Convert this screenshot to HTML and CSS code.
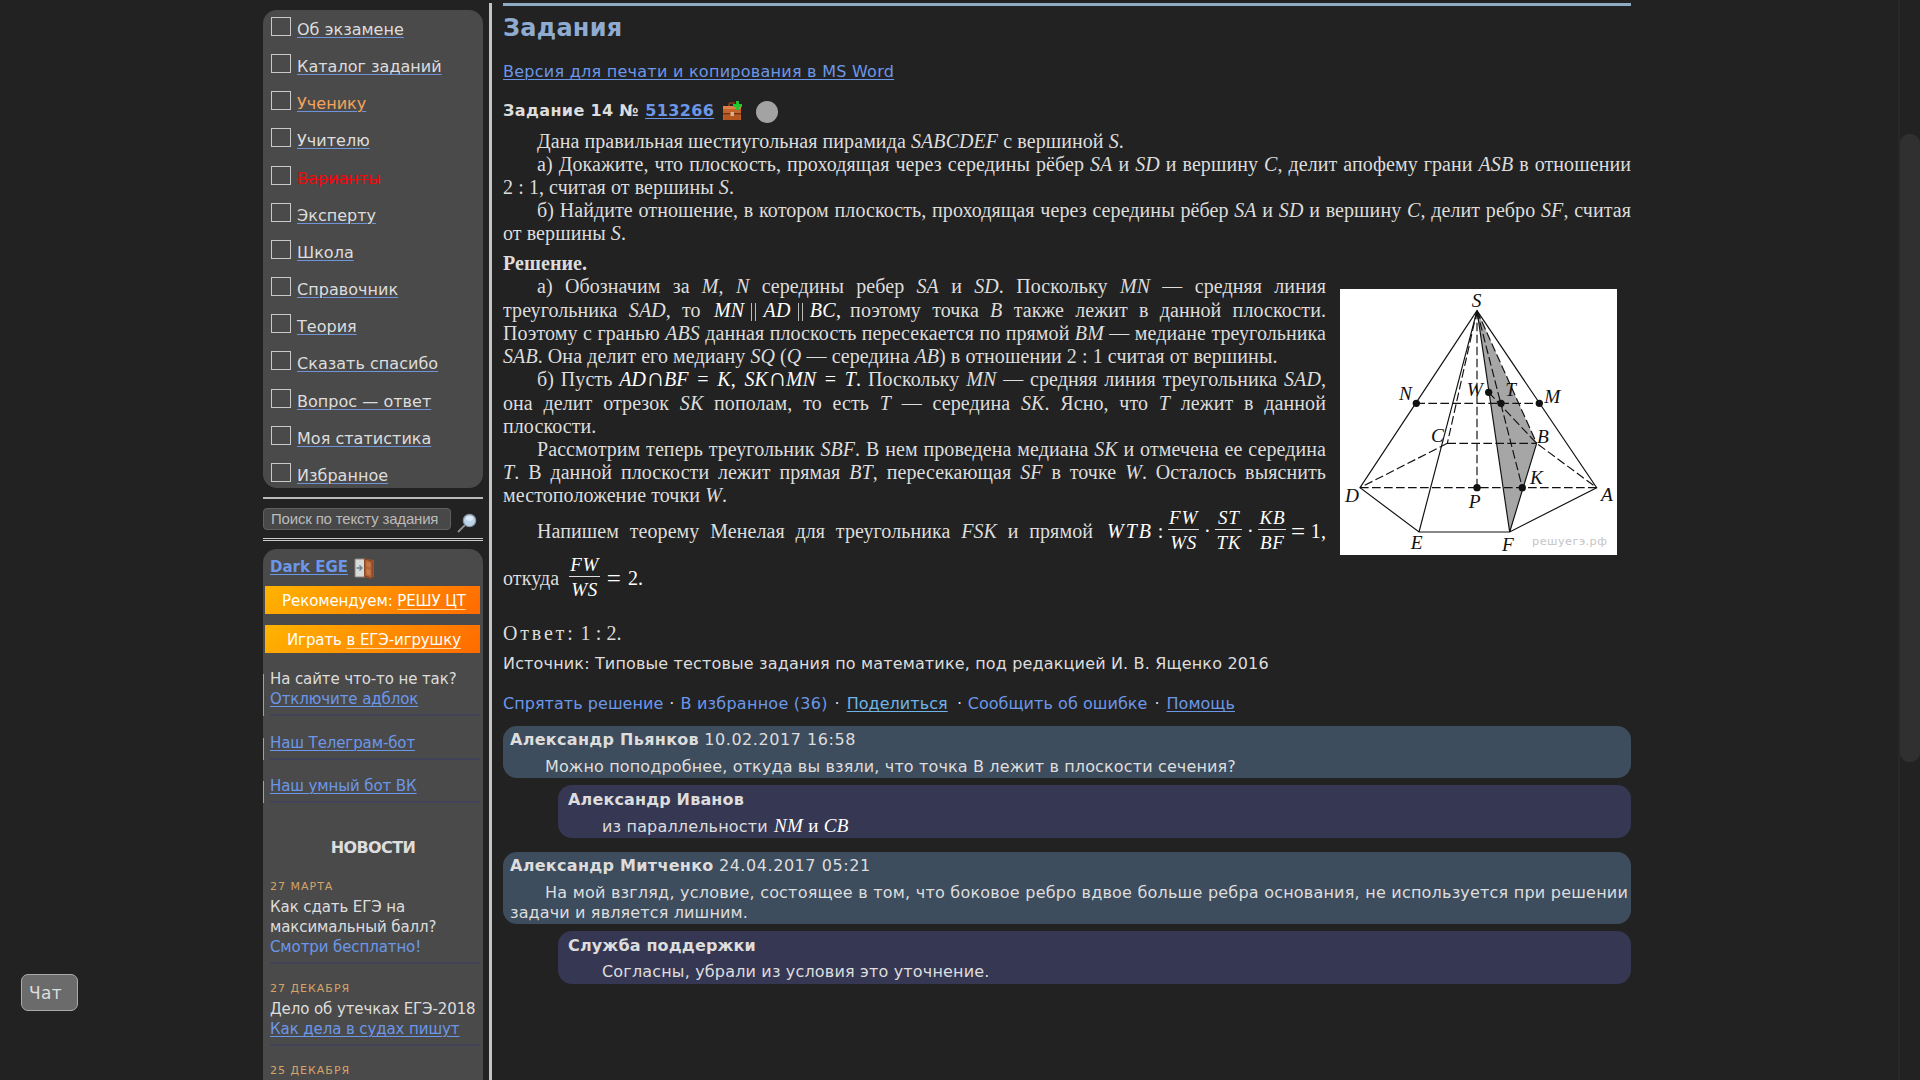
FILE: index.html
```html
<!DOCTYPE html>
<html lang="ru">
<head>
<meta charset="utf-8">
<title>Задания</title>
<link rel="stylesheet" href="styles.css">
</head>
<body>
<div class="page">
  <aside class="sidebar">
    <nav class="menu">
      <a class="item"><i class="box"></i><span>Об экзамене</span></a>
      <a class="item"><i class="box"></i><span>Каталог заданий</span></a>
      <a class="item orange"><i class="box"></i><span>Ученику</span></a>
      <a class="item"><i class="box"></i><span>Учителю</span></a>
      <a class="item red"><i class="box"></i><span>Варианты</span></a>
      <a class="item"><i class="box"></i><span>Эксперту</span></a>
      <a class="item"><i class="box"></i><span>Школа</span></a>
      <a class="item"><i class="box"></i><span>Справочник</span></a>
      <a class="item"><i class="box"></i><span>Теория</span></a>
      <a class="item"><i class="box"></i><span>Сказать спасибо</span></a>
      <a class="item"><i class="box"></i><span>Вопрос — ответ</span></a>
      <a class="item"><i class="box"></i><span>Моя статистика</span></a>
      <a class="item"><i class="box"></i><span>Избранное</span></a>
    </nav>
    <div class="rule"></div>
    <div class="search">
      <div class="field">Поиск по тексту задания</div>
      <svg width="22" height="22" viewBox="0 0 22 22"><path d="M1 20 8 13" stroke="#8f8f8f" stroke-width="1.8"/><circle cx="12.500" cy="8.500" r="6.200" fill="#bcd3e8" stroke="#8794a3" stroke-width="1.2"/><ellipse cx="12.500" cy="6.500" rx="3.600" ry="2.400" fill="#dceaf6"/></svg>
    </div>
    <div class="rule-double"></div>
    <section class="panel">
      <div class="user"><a class="link">Dark EGE</a>
        <svg width="21" height="22" viewBox="0 0 21 22"><path d="M1 1h10v18H1z" fill="#d9dbdb" stroke="#8b8480"/><path d="M10 .5 20 2v17l-3 2-7-2z" fill="#9c5230"/><path d="m11 1 7 2.500V20l-7-2z" fill="#b5673a" stroke="#70351d" stroke-width=".6"/><path d="m12.500 4 4 1.300v4l-4-1.300zM12.500 11l4 1.300v5l-4-1.300z" fill="#c57a4e"/><path d="M2.500 10h5M5.500 7.500 8 10l-2.500 2.500" fill="none" stroke="#6c8290" stroke-width="1.400"/></svg>
      </div>
      <div class="banner"><span>Рекомендуем: <u>РЕШУ ЦТ</u></span></div>
      <div class="banner"><span>Играть <u>в ЕГЭ-игрушку</u></span></div>
      <div class="note adblock">На сайте что-то не так?<br><a class="link">Отключите адблок</a></div>
      <div class="note telegram"><a class="link">Наш Телеграм-бот</a></div>
      <div class="note vk"><a class="link">Наш умный бот ВК</a></div>
      <h3 class="news-title">НОВОСТИ</h3>
      <div class="news"><div class="date">27 МАРТА</div>Как сдать ЕГЭ на<br>максимальный балл?<br><a class="plain">Смотри бесплатно!</a></div>
      <div class="news"><div class="date">27 ДЕКАБРЯ</div>Дело об утечках ЕГЭ-2018<br><a class="link">Как дела в судах пишут</a></div>
      <div class="news"><div class="date">25 ДЕКАБРЯ</div></div>
    </section>
  </aside>
  <div class="divider"></div>
  <main class="main">
    <h1>Задания</h1>
    <p class="print"><a class="link">Версия для печати и копирования в MS Word</a></p>
    <div class="task-head"><b>Задание 14 № <a class="link">513266</a></b>
      <svg class="case" width="22" height="22" viewBox="0 0 22 22"><path d="M7 6V3.500Q7 2 8.500 2H13" fill="none" stroke="#8d3a17" stroke-width="1.600"/><path d="M1 5h18v14H1z" fill="#c4622b"/><path d="M1 5h18v3H1z" fill="#dd8146"/><path d="M1 12h18v1.500H1z" fill="#7a3213"/><path d="M2 14h16v5H2z" fill="#b5571f"/><path d="M8.500 11h3.500v4H8.500z" fill="#d9b48a"/><path d="M15.500 0v9M11 4.500h9" stroke="#1fc92d" stroke-width="2.800"/></svg>
      <i class="dot"></i>
    </div>
    <article class="text statement">
      <p class="in">Дана правильная шестиугольная пирамида <i>SABCDEF</i> с вершиной <i>S</i>.</p>
      <p class="in j">а) Докажите, что плоскость, проходящая через середины рёбер <i>SA</i> и <i>SD</i> и вершину <i>C</i>, делит апофему грани <i>ASB</i> в отношении</p>
      <p>2 : 1, считая от вершины <i>S</i>.</p>
      <p class="in j">б) Найдите отношение, в котором плоскость, проходящая через середины рёбер <i>SA</i> и <i>SD</i> и вершину <i>C</i>, делит ребро <i>SF</i>, считая</p>
      <p>от вершины <i>S</i>.</p>
    </article>
    <div class="solution">
      <article class="text">
        <p><b>Решение.</b></p>
        <p class="in j">а) Обозначим за <i>M, N</i> середины ребер <i>SA</i> и <i>SD</i>. Поскольку <i>MN</i> — средняя линия</p>
        <p class="j tall">треугольника <i>SAD</i>, то <span class="math m1"><i>MN</i><s class="par"></s><i>AD</i><s class="par"></s><i>BC</i>,</span> поэтому точка <i>B</i> также лежит в данной плоскости.</p>
        <p class="j">Поэтому с гранью <i>ABS</i> данная плоскость пересекается по прямой <i>BM</i> — медиане треугольника</p>
        <p><i>SAB</i>. Она делит его медиану <i>SQ</i> (<i>Q</i> — середина <i>AB</i>) в отношении 2 : 1 считая от вершины.</p>
        <p class="in j">б) Пусть <span class="math m2"><i>AD</i><span class="cap">∩</span><i>BF</i> = <i>K</i>, <i>SK</i><span class="cap">∩</span><i>MN</i> = <i>T</i>.</span> Поскольку <i>MN</i> — средняя линия треугольника <i>SAD</i>,</p>
        <p class="j tall">она делит отрезок <i>SK</i> пополам, то есть <i>T</i> — середина <i>SK</i>. Ясно, что <i>T</i> лежит в данной</p>
        <p>плоскости.</p>
        <p class="in j">Рассмотрим теперь треугольник <i>SBF</i>. В нем проведена медиана <i>SK</i> и отмечена ее середина</p>
        <p class="j"><i>T</i>. В данной плоскости лежит прямая <i>BT</i>, пересекающая <i>SF</i> в точке <i>W</i>. Осталось выяснить</p>
        <p>местоположение точки <i>W</i>.</p>
        <div class="formula">
          <p class="in j grow">Напишем теорему Менелая для треугольника <i>FSK</i> и прямой</p>
          <div class="math expr"><i class="sp">WTB</i><span>:</span><span class="frac"><i>FW</i><i>WS</i></span><span>·</span><span class="frac"><i>ST</i><i>TK</i></span><span>·</span><span class="frac"><i>KB</i><i>BF</i></span><span class="eq">=</span><span>1,</span></div>
        </div>
        <div class="formula">
          <p>откуда</p>
          <div class="math expr short"><span class="frac"><i>FW</i><i>WS</i></span><span class="eq">=</span><span>2.</span></div>
        </div>
        <p class="answer"><span>Ответ:</span> 1 : 2.</p>
      </article>
      <svg class="figure" width="277" height="266" viewBox="30 57 831 798">
        <path fill="#fff" d="M30 57h831v798H30z"/>
        <path fill="#a6a6a6" d="M441 122 620 520 539 786z"/>
        <g fill="none" stroke="#111" stroke-width="3.500">
          <path d="M441 122 90 653 267 786H539L800 653zM441 122 267 786M441 122 539 786 620 520"/>
          <path stroke-dasharray="26 10" d="M441 122V653M90 653H800M259 400H628M352 520H620M352 520 90 653M441 122 352 520M441 122 620 520M441 122 577 653M476 367 620 520 800 653"/>
        </g>
        <g fill="#111"><circle cx="259" cy="400" r="11"/><circle cx="628" cy="400" r="11"/><circle cx="476" cy="367" r="11"/><circle cx="513" cy="400" r="11"/><circle cx="441" cy="653" r="11"/><circle cx="577" cy="653" r="11"/></g>
        <g class="labels"><text x="425" y="111">S</text><text x="207" y="390">N</text><text x="410" y="377">W</text><text x="526" y="378">T</text><text x="643" y="400">M</text><text x="303" y="515">C</text><text x="621" y="519">B</text><text x="600" y="643">K</text><text x="45" y="697">D</text><text x="416" y="715">P</text><text x="813" y="693">A</text><text x="242" y="836">E</text><text x="516" y="844">F</text></g>
        <text class="mark" x="606" y="825" textLength="225">решуегэ.рф</text>
      </svg>
    </div>
    <p class="source">Источник: Типовые тестовые задания по математике, под редакцией И. В. Ященко 2016</p>
    <div class="actions"><a>Спрятать решение</a><b class="narrow">·</b><a class="fav">В избранное (36)</a><b>·</b><a class="share">Поделиться</a><b class="wide">·</b><a>Сообщить об ошибке</a><b>·</b><a class="link">Помощь</a></div>
    <div class="comments">
      <div class="comment"><div class="who"><b>Александр Пьянков</b> <time>10.02.2017 16:58</time></div><p>Можно поподробнее, откуда вы взяли, что точка В лежит в плоскости сечения?</p></div>
      <div class="comment reply"><div class="who"><b>Александр Иванов</b></div><p>из параллельности <span class="math nm"><i>NM</i> и <i>CB</i></span></p></div>
      <div class="comment large"><div class="who"><b>Александр Митченко</b> <time>24.04.2017 05:21</time></div><p class="long">На мой взгляд, условие, состоящее в том, что боковое ребро вдвое больше ребра основания, не используется при решении</p><p class="rest">задачи и является лишним.</p></div>
      <div class="comment reply"><div class="who"><b>Служба поддержки</b></div><p>Согласны, убрали из условия это уточнение.</p></div>
    </div>
  </main>
</div>
<div class="scroll"><div class="thumb"></div></div>
<div class="chat">Чат</div>
</body>
</html>
```
FILE: styles.css
```css
* { box-sizing: border-box; }
html, body { height: 100%; }
body { margin: 0; overflow: hidden; background: #222; color: #ddd; font: 16px/20px "DejaVu Sans", sans-serif; letter-spacing: .14px; }
p, h1, h3 { margin: 0; }
p { white-space: nowrap; }
.page { display: flex; height: 1080px; overflow: hidden; padding-left: 263px; }
.link { color: #6c97e8; text-decoration: underline; text-decoration-thickness: 1px; text-underline-offset: 2px; }

.sidebar { width: 220px; padding-top: 10px; flex: none; }
.menu { display: block; height: 478px; padding: 7px 0 0 8px; background: #4a4a4a; border-radius: 14px; }
.item { display: flex; height: 37.17px; gap: 6px; letter-spacing: .03px; }
.item span { margin-top: 3px; height: 20px; text-decoration: underline; text-decoration-color: #6f93d6; text-decoration-thickness: 1px; text-underline-offset: 2px; white-space: nowrap; }
.box { width: 20px; height: 19px; border: 1.5px solid #c9c9c9; flex: none; }
.orange { color: #f5a35c; }
.red { color: #e80c0c; }
.red span { text-decoration: line-through #e80c0c 1px; }
.rule { margin-top: 9px; height: 2px; background: #b9b9b9; }
.search { display: flex; align-items: flex-start; margin-top: 9px; height: 30px; gap: 6px; }
.field { width: 188px; height: 22px; padding-left: 7px; border: 1px solid #606060; border-radius: 4px; background: #484848; color: #bbb; font: 15px/20px "Liberation Sans", sans-serif; letter-spacing: -.18px; white-space: nowrap; }
.search svg { margin-top: 4px; }
.rule-double { height: 3px; border-top: 1px solid #ccc; border-bottom: 1px solid #ccc; }
.panel { margin-top: 8px; height: 560px; padding-top: 8px; background: #4a4a4a; border-radius: 14px 14px 0 0; font-size: 15px; letter-spacing: -.1px; white-space: nowrap; }
.user { display: flex; height: 29px; padding-left: 7px; gap: 6px; font-weight: bold; letter-spacing: 0; }
.user svg { margin-top: 1px; }
.banner { width: 215px; height: 28px; margin: 0 0 11px 2px; padding-left: 3px; background: linear-gradient(135deg, #ffb400, #ff6a00); color: #fff; text-align: center; line-height: 30px; }
.banner u { text-decoration-color: #ffd9a0; text-decoration-thickness: 1px; text-underline-offset: 3px; }
.note { position: relative; margin-right: 3px; padding-left: 7px; }
.note::before { content: ""; position: absolute; left: 0; top: 5px; bottom: 0; width: 1px; background: #f0901e; }
.note::after, .news::after { content: ""; position: absolute; left: 7px; right: 0; bottom: 0; height: 2px; background: #42435a; }
.adblock { margin-top: 16px; height: 47px; }
.telegram { margin-top: 17px; height: 27px; }
.vk { margin-top: 16px; height: 27px; }
.news-title { margin: 35px 0 22px; text-align: center; font-size: 16px; line-height: 20px; letter-spacing: -.6px; }
.news { position: relative; margin: 0 3px 18px 0; padding: 0 0 7px 7px; }
.news:last-child::after { display: none; }
.date { height: 17px; color: #d6a468; font-size: 11px; line-height: 14px; letter-spacing: 1px; }
.plain { color: #6c97e8; }

.divider { flex: none; width: 3px; margin: 3px 11px 0 6px; background: #c4c4c4; }
.main { width: 1128px; margin-top: 3px; border-top: 3px solid #8fabc4; }
h1 { margin-top: 8px; color: #8fabd0; font-size: 24px; line-height: 28px; letter-spacing: .25px; }
.print { margin-top: 20px; letter-spacing: .26px; }
.task-head { display: flex; margin-top: 19px; height: 29px; letter-spacing: .38px; white-space: pre; }
.case { margin-left: 8px; }
.dot { width: 22px; height: 22px; margin-left: 12px; border-radius: 50%; background: #a3a3a3; }
.text { font: 20px/23px "Liberation Serif", serif; letter-spacing: .08px; }
.in { padding-left: 34px; }
.j { text-align: justify; text-align-last: justify; white-space: normal; height: 23px; }
.solution { display: flex; gap: 14px; margin-top: 7px; height: 402px; }
.solution .text { width: 823px; }
.tall { height: 24px; padding-top: 1px; }
.figure { margin-top: 37px; flex: none; }
.labels { font: italic 58px "Liberation Serif", serif; fill: #111; letter-spacing: 0; }
.mark { font: 34px "DejaVu Sans", sans-serif; fill: #c4c4c4; }
.math { color: #fff; font: 20px/23px "Liberation Serif", serif; }
.m1, .m2 { display: inline-block; height: 23px; white-space: nowrap; vertical-align: top; }
.m1 { width: 127px; padding-left: 2px; letter-spacing: .3px; }
.m2 { width: 242px; }
.par { display: inline-block; width: 5px; height: 18px; margin: 0 7px; border: solid #bbb; border-width: 0 1px; vertical-align: -4px; }
.cap { display: inline-block; width: 18px; text-align: center; text-align-last: center; font-size: 26px; line-height: 20px; }
.formula { display: flex; align-items: center; height: 47px; }
.formula + .formula { gap: 10px; }
.text p + .formula { margin-top: 1px; }
.grow { width: 590px; }
.expr { display: flex; align-items: center; justify-content: space-between; width: 219px; margin-left: 14px; }
.short { width: 74px; margin-left: 0; }
.sp { letter-spacing: 2px; }
.eq { width: 15px; font-size: 25px; }
.frac { display: flex; flex-direction: column; padding-bottom: 2px; text-align: center; letter-spacing: .8px; font-size: 19px; }
.frac i { padding: 0 1px; line-height: 25px; text-align-last: center; }
.frac i:first-child { border-bottom: 1px solid #ddd; line-height: 22px; }
.answer { margin-top: 20px; }
.answer span { letter-spacing: 2.8px; }
.source { letter-spacing: .16px; }
.actions { display: flex; margin-top: 20px; color: #ddd; letter-spacing: .05px; white-space: nowrap; }
.actions a { color: #6c97e8; }
.actions .fav { letter-spacing: .25px; }
.actions b { width: 19px; text-align: center; font-weight: normal; }
.actions .narrow { width: 17px; }
.actions .wide { width: 20px; padding-left: 4px; }
.actions .share { color: #6fb4e8; text-decoration: underline; text-underline-offset: 2px; }
.comments { margin-top: 12px; }
.comment { height: 52px; padding: 4px 3px 0 7px; background: #3d4d5d; border-radius: 14px; }
.comment p { margin-top: 7px; padding-left: 35px; letter-spacing: .14px; }
.reply { height: 53px; margin: 7px 0 14px 55px; padding: 5px 3px 0 10px; background: #363853; }
.large { height: 72px; }
.comment p.long { text-align-last: justify; letter-spacing: .2px; }
.comment p.rest { margin: 0; padding: 0; }
time { letter-spacing: .56px; }
.who b { letter-spacing: .3px; }
.reply .who b { letter-spacing: .15px; }
.reply p { margin-top: 6px; padding-left: 34px; letter-spacing: .17px; }
.nm { margin-left: 1px; font-size: 19px; line-height: 20px; letter-spacing: .3px; }

.scroll { position: fixed; right: 0; top: 0; width: 22px; height: 1080px; border-left: 2px solid #282828; }
.thumb { margin-top: 134px; height: 628px; border-radius: 9px; background: #303030; }
.chat { position: fixed; left: 21px; top: 974px; width: 57px; height: 37px; padding-left: 7px; border: 1px solid #aaa; border-radius: 7px; background: #6b6b6b; font-size: 17px; line-height: 37px; letter-spacing: .3px; }
```
